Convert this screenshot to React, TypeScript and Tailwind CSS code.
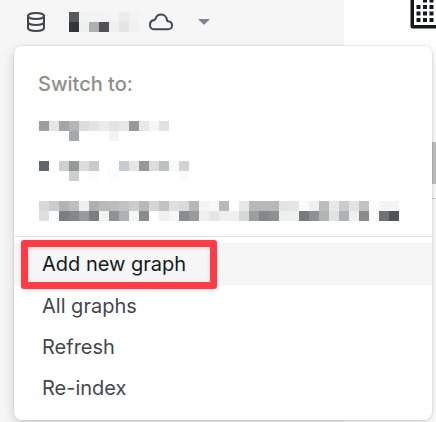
import { TbDatabase } from "react-icons/tb";

interface MosaicProps {
  label: string;
  rows: string[][];
}

const currentGraph = [
  ["#58595d", "#f2f2f2", "#f3f3f3", "#f3f3f3", "#f5f5f5", "#ebebeb", "#f3f3f3"],
  ["#32363a", "#f0f0f0", "#aeafb1", "#525358", "#f0f0f0", "#e5e5e5", "#f1f1f1"],
];

const graphs = [
  {
    label: "Graph 1",
    rows: [
      ["#9d9ea0", "#e5e5e5", "#a5a5a7", "#b5b6b8", "#dbdddc", "#e4e4e4", "#ececec", "#e2e4e3", "#e6e8e7", "#979899", "#e9e9e9", "#f6f6f6", "#e0e2e1"],
      ["", "", "", "#a8a9aa", "", "", "", "#f3f3f3"],
    ],
  },
  {
    label: "Graph 2",
    rows: [
      ["#66676c", "", "#d0d0d0", "#969798", "#dcdcdc", "#c9cacc", "#fefefe", "#fefefe", "#cacbcd", "#e6e6e6", "#979899", "#dcdcdc", "#bebfbf", "#f9f9f9", "#d3d3d3"],
      ["", "", "", "#cdced0", "", "#fcfcfc", "", "#fbfbfb", "", "", "", "", "", "", "#fcfcfc"],
    ],
  },
  {
    label: "Graph 3",
    rows: [
      [
        "#d8d8d8", "#cbccce", "#b2b3b5", "#bdbfbe", "#efefef", "#adaeb1", "#b8b9bb", "#bbbcbe", "#c2c3c5", "#cbcdcc", "#b8b8b8", "#d6d6d6",
        "#c2c2c2", "#dfe1e0", "#d8dadb", "#b6b7b9", "#f4f4f4", "#f8f8f8", "#b8b9bb", "", "#e7e7e7", "#b7b8ba", "#b7b8ba", "#b7b8ba",
        "#e2e4e3", "#e6e6e6", "#fbfbfb", "#eff1f0", "#bbbcbf", "#e7e9e8", "#cacccb", "#e3e3e3", "#c1c2c4", "#fdfdfd", "#f4f4f4", "#f4f4f4",
      ],
      [
        "#dfdfdf", "#fcfcfc", "#7d7e80", "#86878b", "#98999b", "#7d7e80", "#f3f3f3", "#909193", "#b0b1b3", "#f4f4f4", "#8a8b8d", "",
        "#efefef", "#f7f7f7", "#8b8c8e", "#999a9c", "#efefef", "#e5e5e5", "#efefef", "#efefef", "#d6d8d7", "#9c9d9f", "#86878a", "#8f9092",
        "#efefef", "#eef0ef", "#797a7f", "#8f9092", "#b2b3b5", "#e2e2e2", "#b0b1b3", "#efefef", "#8a8b8d", "#fdfdfd", "#707172", "#525357",
      ],
    ],
  },
];

const actions = ["Add new graph", "All graphs", "Refresh", "Re-index"];

function Mosaic({ label, rows }: MosaicProps) {
  return (
    <span role="img" aria-label={label} className="block">
      {rows.map((row, r) => (
        <span key={r} className="flex h-[10px]">
          {row.map((color, c) => (
            <span key={c} className="w-[10px] shrink-0" style={{ backgroundColor: color || undefined }} />
          ))}
        </span>
      ))}
    </span>
  );
}

function CloudIcon() {
  return (
    <svg width="26" height="20" viewBox="0 0 26 20" fill="none" stroke="#43474b" strokeWidth="2" strokeLinejoin="round">
      <path d="M6 17.3h14.2c2.2 0 3.8-1.7 3.8-3.9 0-2.4-1.7-4-4.1-4.1-.8 0-.9-.4-.9-1.1C18.7 5 16.3 2.5 13.1 2.5 10.3 2.5 8.3 4.3 7.600 6.7 7.4 7.5 7.1 7.8 6.3 7.9 3.7 8.2 2 10.2 2 12.9c0 2.5 1.7 4.400 4 4.400z" />
    </svg>
  );
}

function KeypadIcon() {
  return (
    <svg width="26" height="30" viewBox="0 0 26 30" fill="#14191d">
      <path d="M.5 0H4v25h22v3.500H2.500a2 2 0 0 1-2-2z" />
      {[0.5, 7, 13.500, 20].map((y) =>
        [8.500, 15, 21.500].map((x) =>
          x === 8.5 && y === 0.5 ? null : (
            <rect key={`${x}-${y}`} x={x - 2} y={y - 2} width="4" height="4" />
          )
        )
      )}
    </svg>
  );
}

export default function App() {
  return (
    <div className="relative flex min-h-screen overflow-hidden bg-white font-['Inter',sans-serif]">
      <aside className="w-[344px] shrink-0 bg-[#f6f6f6]">
        <button type="button" aria-haspopup="menu" aria-expanded="true" className="flex h-[43px] items-center pl-6">
          <TbDatabase size={24} color="#43474b" />
          <span className="ml-[21px]">
            <Mosaic label="Current graph" rows={currentGraph} />
          </span>
          <span className="ml-[9px]">
            <CloudIcon />
          </span>
          <svg className="ml-6" width="12" height="6" viewBox="0 0 12 6" fill="#7c8694">
            <path d="M0 0h12L7 5Q6 6 5 5z" />
          </svg>
        </button>
      </aside>

      <main className="flex grow flex-col items-end">
        <div className="h-[142px]">
          <KeypadIcon />
        </div>
        <div className="h-[42px] w-2 bg-[#c4c4c4]" />
        <div className="mt-[14px] w-full border-t border-[#d0d0d0]" />
      </main>

      <div
        role="menu"
        className="absolute top-[46px] right-1 left-[14px] rounded-lg bg-white pb-3 shadow-[0_0_0_1px_rgba(0,0,0,0.05),0_4px_12px_rgba(0,0,0,0.16)]"
      >
        <h2 className="px-6 pt-6 text-xl leading-[28px] font-medium text-[#8f8f89]">Switch to:</h2>
        <div className="flex flex-col gap-5 px-[25px] pt-[23px] pb-[15px]">
          {graphs.map((graph) => (
            <button key={graph.label} type="button" role="menuitem" className="text-left">
              <Mosaic label={graph.label} rows={graph.rows} />
            </button>
          ))}
        </div>
        <hr className="border-[#e2e2e2]" />
        <div className="relative pt-[6px]">
          {actions.map((action, i) => (
            <button
              key={action}
              type="button"
              role="menuitem"
              className={`block w-full px-7 text-left text-xl ${
                i === 0 ? "h-[42px] bg-[#f6f6f6] text-[#14191d]" : "h-[41px] text-[#43474b]"
              }`}
            >
              {action}
            </button>
          ))}
          <div className="pointer-events-none absolute top-[3px] left-[7px] h-[49px] w-[196px] rounded-[3px] border-[7px] border-[#ff3b47] shadow-[0_1px_4px_rgba(0,0,0,0.15),inset_0_1px_4px_rgba(0,0,0,0.15)]" />
        </div>
      </div>
    </div>
  );
}
